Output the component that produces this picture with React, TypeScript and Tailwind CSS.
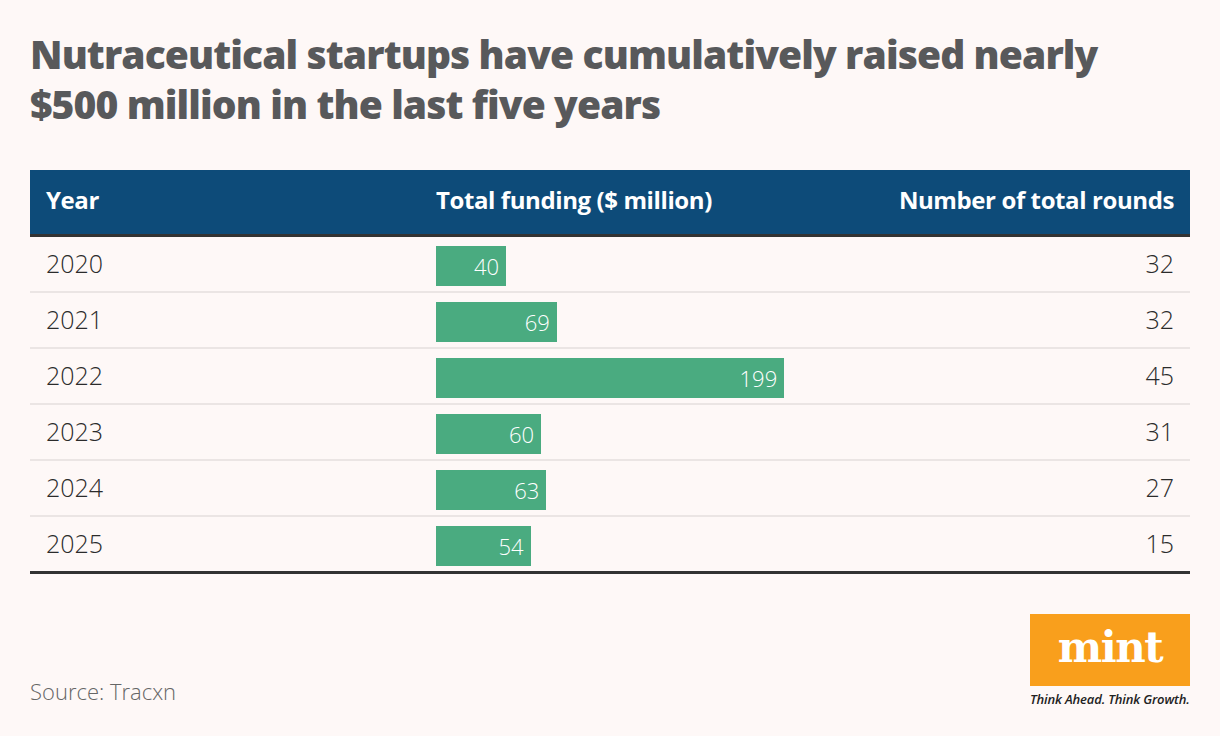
const rows = [
  { year: "2020", funding: 40, rounds: 32 },
  { year: "2021", funding: 69, rounds: 32 },
  { year: "2022", funding: 199, rounds: 45 },
  { year: "2023", funding: 60, rounds: 31 },
  { year: "2024", funding: 63, rounds: 27 },
  { year: "2025", funding: 54, rounds: 15 },
];

export default function App() {
  return (
    <div className="w-[1220px] h-[736px] bg-[#fef8f7] px-[30px] pt-[29px] font-['Open_Sans',sans-serif] flex flex-col">
      {/* Title */}
      <h1 className="font-['Open_Sans',sans-serif] font-extrabold text-[39px] leading-[50px] text-[#58595b] tracking-[-0.9px]">
        Nutraceutical startups have cumulatively raised nearly
        <br />
        $500 million in the last five years
      </h1>

      {/* Table */}
      <div className="mt-[41px] border-b-[3px] border-[#333333]">
        <div className="flex items-center h-[67px] pb-1 bg-[#0d4b79] border-b-[3px] border-[#333333] font-['Open_Sans',sans-serif] font-bold text-[24px] text-white tracking-[-0.4px]">
          <div className="w-[406px] pl-4">Year</div>
          <div className="flex-1">Total funding ($ million)</div>
          <div className="pr-4 text-right">Number of total rounds</div>
        </div>

        {rows.map((r, i) => (
          <div
            key={r.year}
            className={
              i === rows.length - 1
                ? "flex items-center h-[54px] text-[25px] text-[#2b2b2b] font-light"
                : "flex items-center h-[56px] border-b-2 border-[#ebe5e4] text-[25px] text-[#2b2b2b] font-light"
            }
          >
            <div className="w-[406px] pl-4">{r.year}</div>
            <div className="flex-1 pt-1">
              <div
                className="h-[40px] bg-[#4aab80] flex items-center justify-end pr-[7px] text-white text-[22px] font-light"
                style={{ width: `${r.funding * 1.75}px` }}
              >
                {r.funding}
              </div>
            </div>
            <div className="pr-4 text-right">{r.rounds}</div>
          </div>
        ))}
      </div>

      {/* Footer */}
      <div className="flex justify-between items-end mt-[40px]">
        <div className="text-[22px] font-light text-[#666666] mb-[2px]">Source: Tracxn</div>
        <div className="flex flex-col items-stretch w-[160px]">
          <div className="h-[72px] bg-[#f99f1c] flex items-center justify-center">
            <span className="font-['DejaVu_Serif',serif] font-bold text-white text-[42px] leading-none tracking-[-1.5px] pb-1">
              mint
            </span>
          </div>
          <div className="mt-[4px] text-[13px] italic font-semibold text-[#222222] whitespace-nowrap tracking-[-0.15px]">
            Think Ahead. Think Growth.
          </div>
        </div>
      </div>
    </div>
  );
}
